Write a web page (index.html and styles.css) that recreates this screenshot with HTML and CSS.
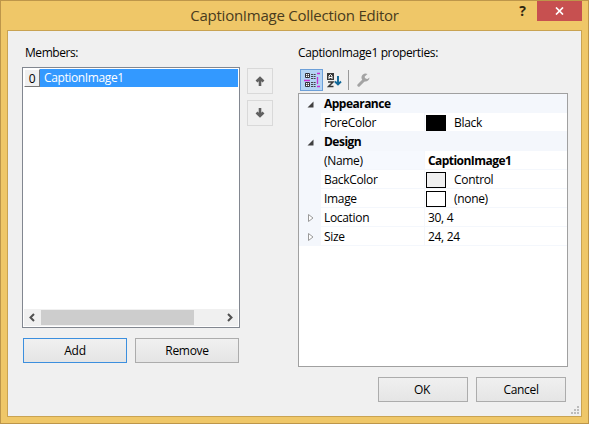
FILE: index.html
```html
<!DOCTYPE html>
<html lang="en">
<head>
<meta charset="utf-8">
<title>CaptionImage Collection Editor</title>
<link rel="stylesheet" href="styles.css">
</head>
<body>
<div class="window">
  <header class="titlebar">
    <h1 class="title">CaptionImage Collection Editor</h1>
    <button class="help">?</button>
    <button class="close" aria-label="Close"><svg width="9" height="8" viewBox="0 0 9 8"><path d="M1 .5 8 7.5M8 .5 1 7.5" stroke="#fff" stroke-width="1.7"/></svg></button>
  </header>
  <main class="client">
    <section class="members">
      <div class="label l-members">Members:</div>
      <div class="listbox">
        <div class="item"><span class="index">0</span><span class="item-name">CaptionImage1</span></div>
        <div class="scrollbar">
          <svg width="17" height="15" viewBox="0 0 17 15"><path d="M10 4 6.500 7.500l3.500 3.500" fill="none" stroke="#505050" stroke-width="2"/></svg>
          <span class="thumb"></span>
          <svg class="right" width="18" height="15" viewBox="0 0 18 15"><path d="M8 4l3.500 3.500L8 11" fill="none" stroke="#505050" stroke-width="2"/></svg>
        </div>
      </div>
      <div class="actions">
        <button class="btn default">Add</button>
        <button class="btn">Remove</button>
      </div>
    </section>
    <div class="order">
      <button class="move" aria-label="Move up"><svg width="12" height="12" viewBox="0 0 12 12"><path d="M6 11V5M2.500 6.500 6 3l3.500 3.500" fill="none" stroke="#606060" stroke-width="2.600"/></svg></button>
      <button class="move" aria-label="Move down"><svg width="12" height="12" viewBox="0 0 12 12"><path d="M6 1v6M2.500 5.500 6 9l3.500-3.500" fill="none" stroke="#606060" stroke-width="2.600"/></svg></button>
    </div>
    <section class="properties">
      <div class="label l-props">CaptionImage1 properties:</div>
      <div class="toolbar">
        <button class="tool selected" aria-label="Categorized"><svg width="17" height="16" viewBox="0 0 17 16">
          <path d="M2.500 1.500h4v4h-4zM2.500 10.500h4v4h-4z" fill="#fff" stroke="#303038"/>
          <path d="M3 3.500h3M4.500 2v3M3 12.500h3M4.500 11v3" stroke="#303038" stroke-width=".7"/>
          <path d="M8 2.500h5M8 4.500h5M8 6.500h5M8 10.500h5M8 12.500h5M8 14.500h5" stroke="#45454d" stroke-dasharray="2 .6"/>
          <path d="M1 8.500h6M14 1.500h3M14 14.500h3M14.500 5v7" stroke="#c832d2" stroke-width="1.300"/>
        </svg></button>
        <button class="tool" aria-label="Alphabetical"><svg width="15" height="16" viewBox="0 0 15 16">
          <path d="M0 1h7v7H0z" fill="#383838"/>
          <path d="M2 7V4l1.500-1.500L5 4v3M2 5.500h3" fill="none" stroke="#fff"/>
          <path d="M1 10h5l-4.500 4.500H6.500" fill="none" stroke="#383838" stroke-width="1.500"/>
          <path d="M11 4v8M8 9.500l3 3 3-3" fill="none" stroke="#126898" stroke-width="1.900"/>
        </svg></button>
        <span class="separator"></span>
        <button class="tool" aria-label="Property pages"><svg width="13" height="14" viewBox="0 0 13 14">
          <path d="M1.800 12.200 7.500 6.500" stroke="#a3a3a3" stroke-width="3" stroke-linecap="round"/>
          <path d="M10.500 1A4 4 0 1 0 12.500 4.500L10.500 6 8 5.500 7.700 3.500z" fill="#a3a3a3"/>
        </svg></button>
      </div>
      <div class="grid">
        <div class="category"><svg width="7" height="7" viewBox="0 0 7 7"><path d="M6.500.5v6h-6z" fill="#404040"/></svg><b>Appearance</b></div>
        <div class="row"><i></i><span class="name">ForeColor</span><span class="value"><em class="swatch black"></em>Black</span></div>
        <div class="category"><svg width="7" height="7" viewBox="0 0 7 7"><path d="M6.500.5v6h-6z" fill="#404040"/></svg><b>Design</b></div>
        <div class="row"><i></i><span class="name name-key">(Name)</span><span class="value"><b class="changed">CaptionImage1</b></span></div>
        <div class="row"><i></i><span class="name">BackColor</span><span class="value"><em class="swatch control"></em>Control</span></div>
        <div class="row"><i></i><span class="name">Image</span><span class="value"><em class="swatch"></em>(none)</span></div>
        <div class="row"><i><svg width="6" height="8" viewBox="0 0 6 8"><path d="M.5.5v7L5 4z" fill="#fff" stroke="#999"/></svg></i><span class="name">Location</span><span class="value">30, 4</span></div>
        <div class="row"><i><svg width="6" height="8" viewBox="0 0 6 8"><path d="M.5.5v7L5 4z" fill="#fff" stroke="#999"/></svg></i><span class="name">Size</span><span class="value">24, 24</span></div>
      </div>
      <div class="dialog-actions">
        <button class="btn ok">OK</button>
        <button class="btn">Cancel</button>
      </div>
    </section>
    <svg class="grip" width="8" height="8" viewBox="0 0 8 8"><path d="M6 0h2v2H6zM3 3h2v2H3zM6 3h2v2H6zM0 6h2v2H0zM3 6h2v2H3zM6 6h2v2H6z" fill="#bcbcbc"/></svg>
  </main>
</div>
</body>
</html>
```
FILE: styles.css
```css
* { box-sizing: border-box; }
body {
  margin: 0;
  font: 12px/16px "Open Sans", "Noto Sans", sans-serif;
  letter-spacing: -.32px;
  color: #000;
}
button { font: inherit; letter-spacing: inherit; color: inherit; padding: 0; margin: 0; border: 0; background: none; }
svg { display: block; flex: none; }
.window {
  width: 589px; height: 424px;
  padding: 0 6px 6px;
  border: 1px solid #bd964a;
  background: #efc768;
}
.titlebar { position: relative; height: 29px; display: flex; justify-content: flex-end; }
.title {
  position: absolute; inset: 0;
  margin: 0; text-align: center;
  font-size: 15px; font-weight: 400; line-height: 29px;
  letter-spacing: -.25px; color: #493b1d;
}
.help { position: relative; width: 29px; height: 20px; font-weight: 700; font-size: 14px; color: #302611; }
.close { position: relative; width: 45px; height: 20px; background: #c75050; display: flex; align-items: center; justify-content: center; }
.client {
  position: relative;
  height: 387px;
  display: flex;
  padding: 13px 13px 0 14px;
  border: 1px solid #c9a352;
  background: #f0f0f0;
}
.members { width: 218px; }
.label { height: 23px; padding: 1px 0 0; white-space: nowrap; }
.l-members { padding-left: 3px; letter-spacing: -.45px; }
.l-props { letter-spacing: -.37px; }
.listbox {
  height: 261px;
  display: flex; flex-direction: column; justify-content: space-between;
  padding: 1px;
  border: 1px solid #828790;
  background: #fff;
}
.item { height: 18px; display: flex; background: #3399ff; color: #fff; }
.index {
  width: 16px; text-align: center; line-height: 17px;
  background: #f0f0f0; color: #000;
  border: 1px solid; border-color: #fff #777 #777 #fff;
}
.item-name { padding-left: 4px; line-height: 18px; letter-spacing: -.38px; }
.scrollbar { height: 17px; display: flex; align-items: center; background: #f0f0f0; }
.thumb { width: 153px; height: 15px; background: #cdcdcd; }
.right { margin-left: auto; }
.actions { display: flex; gap: 8px; padding: 10px 0 0 1px; }
.btn {
  width: 104px; height: 25px;
  border: 1px solid #acacac;
  background: linear-gradient(#f0f0f0, #e5e5e5);
}
.default { border-color: #3c8fde; }
.ok { padding-right: 2px; }
.order { width: 58px; padding: 24px 0 0 7px; display: flex; flex-direction: column; gap: 6px; }
.move { width: 26px; height: 26px; border: 1px solid #d9d9d9; display: flex; align-items: center; justify-content: center; }
.properties { width: 270px; }
.toolbar { height: 26px; display: flex; align-items: center; padding: 0 0 0 2px; }
.tool { width: 23px; height: 22px; display: flex; align-items: center; justify-content: center; }
.selected { background: #b5d5f5; border: 1px solid #6c9fd8; }
.separator { width: 1px; height: 20px; margin: 0 3px 0 2px; background: #999; }
.grid { height: 274px; border: 1px solid #a0a0a0; background: #fff; }
.category { height: 19px; display: flex; align-items: center; gap: 10px; padding: 1px 0 0 8px; background: #f4f7fc; letter-spacing: -.52px; }
.row { height: 19px; display: flex; }
.row i { width: 22px; display: flex; align-items: center; padding-left: 9px; background: #f4f7fc; }
.name { width: 104px; padding: 2px 0 0 3px; border: solid #f4f7fc; border-width: 0 1px 1px 0; }
.name-key { background: #f6f9fe; }
.value { flex: 1; display: flex; padding: 2px 0 0 3px; border-bottom: 1px solid #f4f7fc; }
.changed { letter-spacing: -.55px; }
.swatch { width: 20px; height: 16px; margin: 0 8px 0 -2px; border: 1px solid #000; }
.black { background: #000; }
.control { background: #f0f0f0; }
.dialog-actions { display: flex; gap: 8px; padding: 10px 0 0 80px; }
.dialog-actions .btn { width: 90px; }
.grip { position: absolute; right: 2px; bottom: 2px; }
```
